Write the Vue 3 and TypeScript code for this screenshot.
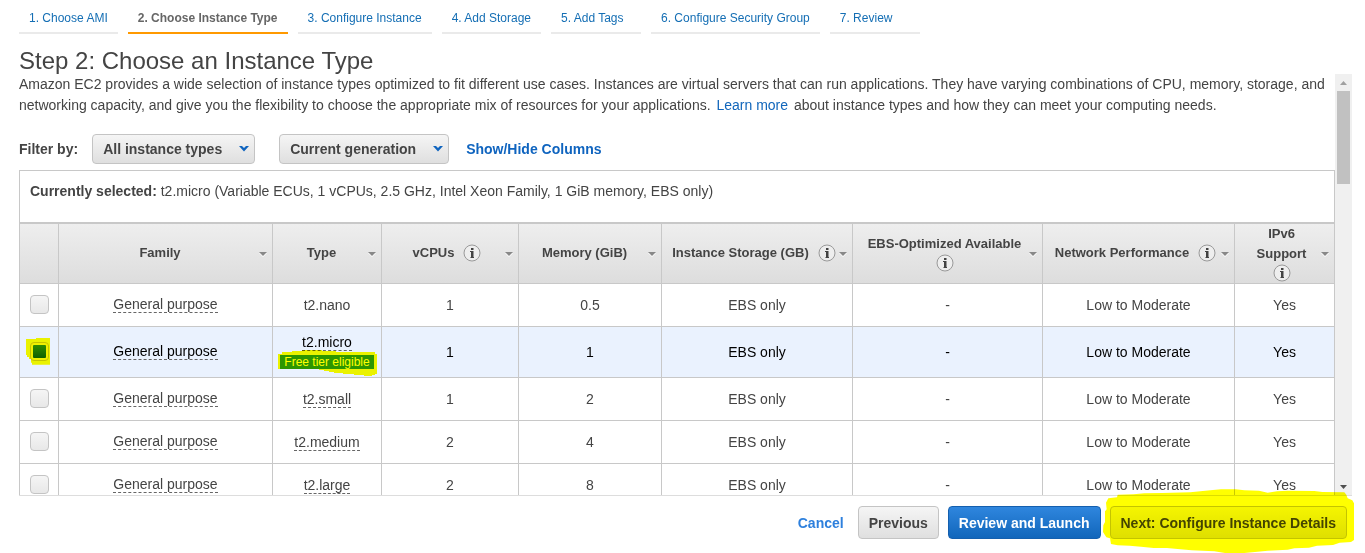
<script setup lang="ts">
import { ref } from 'vue'

interface Column {
  label: string
  width: number
  info?: boolean
  stacked?: boolean
}

interface InstanceType {
  family: string
  type: string
  plain?: boolean
  freeTier?: boolean
  vcpus: string
  memory: string
  storage: string
  ebs: string
  network: string
  ipv6: string
}

const steps: string[] = [
  '1. Choose AMI',
  '2. Choose Instance Type',
  '3. Configure Instance',
  '4. Add Storage',
  '5. Add Tags',
  '6. Configure Security Group',
  '7. Review',
]
const activeStep = 1

const columns: Column[] = [
  { label: 'Family', width: 214 },
  { label: 'Type', width: 109 },
  { label: 'vCPUs', width: 137, info: true },
  { label: 'Memory (GiB)', width: 143 },
  { label: 'Instance Storage (GB)', width: 191, info: true },
  { label: 'EBS-Optimized Available', width: 190, info: true, stacked: true },
  { label: 'Network Performance', width: 192, info: true },
  { label: 'IPv6 Support', width: 100, info: true, stacked: true },
]

function t2(type: string, vcpus: string, memory: string): InstanceType {
  return {
    family: 'General purpose',
    type,
    vcpus,
    memory,
    storage: 'EBS only',
    ebs: '-',
    network: 'Low to Moderate',
    ipv6: 'Yes',
  }
}

const rows: InstanceType[] = [
  { ...t2('t2.nano', '1', '0.5'), plain: true },
  { ...t2('t2.micro', '1', '1'), freeTier: true },
  t2('t2.small', '1', '2'),
  t2('t2.medium', '2', '4'),
  t2('t2.large', '2', '8'),
]

const selected = ref('t2.micro')
const family = ref('All instance types')
const generation = ref('Current generation')
</script>

<template>
  <div class="wizard">
    <nav class="steps" aria-label="Wizard steps">
      <a
        v-for="(step, i) in steps"
        :key="step"
        href="#"
        class="step"
        :class="{ active: i === activeStep }"
        :aria-current="i === activeStep ? 'step' : undefined"
      >{{ step }}</a>
    </nav>

    <h1>Step 2: Choose an Instance Type</h1>

    <div class="viewport">
      <main class="content">
        <p class="intro">
          Amazon EC2 provides a wide selection of instance types optimized to fit different use cases. Instances are virtual servers that can run applications. They have varying combinations of CPU, memory, storage, and networking capacity, and give you the flexibility to choose the appropriate mix of resources for your applications. <a href="#" class="learn">Learn more</a> about instance types and how they can meet your computing needs.
        </p>

        <div class="filters">
          <span class="filter-label">Filter by:</span>
          <span class="dropdown">
            <select v-model="family" aria-label="Instance family">
              <option>All instance types</option>
              <option>General purpose</option>
            </select>
            <svg class="chevron" viewBox="0 0 10 6" aria-hidden="true"><path d="M0 0H3L5 2L7 0H10L5 5.5Z" /></svg>
          </span>
          <span class="dropdown wide">
            <select v-model="generation" aria-label="Generation">
              <option>Current generation</option>
              <option>All generations</option>
            </select>
            <svg class="chevron" viewBox="0 0 10 6" aria-hidden="true"><path d="M0 0H3L5 2L7 0H10L5 5.5Z" /></svg>
          </span>
          <a href="#" class="columns-link">Show/Hide Columns</a>
        </div>

        <div class="panel">
          <p class="current">
            <strong>Currently selected:</strong> t2.micro (Variable ECUs, 1 vCPUs, 2.5 GHz, Intel Xeon Family, 1 GiB memory, EBS only)
          </p>
          <table>
            <colgroup>
              <col class="pick-col" />
              <col v-for="c in columns" :key="c.label" :style="{ width: c.width + 'px' }" />
            </colgroup>
            <thead>
              <tr>
                <th aria-label="Select"></th>
                <th v-for="c in columns" :key="c.label" scope="col">
                  <div class="head" :class="{ 'with-info': c.info }">
                    <span class="head-label" :class="{ stacked: c.stacked }">
                      <span>{{ c.label }}</span>
                      <svg v-if="c.info" class="info" viewBox="0 0 18 18" aria-hidden="true">
                        <circle cx="9" cy="9" r="8" />
                        <path d="M8 4H10.5V6H8ZM7 7H10.5V13H11V14H7.5V13H8V8H7Z" />
                      </svg>
                    </span>
                    <svg class="caret" viewBox="0 0 8 5" aria-hidden="true"><path class="shine" d="M0 1H8L4 5Z" /><path d="M0 0H8L4 4Z" /></svg>
                  </div>
                </th>
              </tr>
            </thead>
            <tbody>
              <tr v-for="r in rows" :key="r.type" :class="{ chosen: selected === r.type }">
                <td>
                  <span class="pick">
                    <input v-model="selected" type="radio" name="instance" :value="r.type" :aria-label="r.type" />
                    <svg v-if="r.freeTier" class="marker pick-marker" viewBox="0 0 72 81" aria-hidden="true">
                      <path d="M0 3H30V0H72V80H18V74H15V63H9V57H3V51H0Z" />
                    </svg>
                  </span>
                </td>
                <td class="family-cell"><span class="term">{{ r.family }}</span></td>
                <td class="type-cell">
                  <span :class="{ term: !r.plain }">{{ r.type }}</span>
                  <span v-if="r.freeTier" class="tier">
                    <span class="badge">Free tier eligible</span>
                    <svg class="marker tier-marker" viewBox="0 0 297 78" aria-hidden="true">
                      <path d="M0 12H12V6H42V3H72V0H132V3H174V6H291V12H297V72H291V75H282V78H258V75H228V72H195V69H168V66H153V63H138V60H123V57H0Z" />
                    </svg>
                  </span>
                </td>
                <td>{{ r.vcpus }}</td>
                <td>{{ r.memory }}</td>
                <td>{{ r.storage }}</td>
                <td>{{ r.ebs }}</td>
                <td>{{ r.network }}</td>
                <td>{{ r.ipv6 }}</td>
              </tr>
            </tbody>
          </table>
        </div>
      </main>

      <div class="scrollbar" aria-hidden="true">
        <svg class="arrow up" viewBox="0 0 7 4"><path d="M0 4L3.5 0L7 4Z" /></svg>
        <div class="track"><div class="thumb"></div></div>
        <svg class="arrow down" viewBox="0 0 7 4"><path d="M0 0L3.5 4L7 0Z" /></svg>
      </div>
    </div>

    <footer>
      <a href="#" class="cancel">Cancel</a>
      <button type="button">Previous</button>
      <button type="button" class="primary">Review and Launch</button>
      <span class="next">
        <button type="button">Next: Configure Instance Details</button>
        <svg class="marker next-marker" viewBox="0 0 795 309" aria-hidden="true">
          <path d="M15 158L22 145L48 142L50 134L98 133L130 130L184 129L268 127L298 124L328 121L360 118L404 118L430 121L474 122L500 128L528 124L560 122L640 123L664 126L730 127L736 134L740 145L754 151L759 160V270L750 276L716 278L696 285L648 287L624 293L580 295L560 299L500 302L470 305L430 309H372L340 304L272 301L230 297L198 294L158 294L120 290L86 287L50 286L30 282L27 265L16 262L6 246L7 226L12 216V184L17 178Z" />
        </svg>
      </span>
    </footer>
  </div>
</template>

<style>
body {
  margin: 0;
  background: #fff;
}
</style>

<style scoped>
.wizard {
  box-sizing: border-box;
  height: 100vh;
  display: flex;
  flex-direction: column;
  overflow: hidden;
  padding-left: 19px;
  color: #444;
  font: 14px/20px "Liberation Sans", Arial, sans-serif;
}
a {
  color: #146eb4;
  text-decoration: none;
}
.steps {
  display: flex;
  gap: 10px;
  padding-top: 8px;
  font-size: 12px;
}
.step {
  box-sizing: border-box;
  min-width: 90px;
  height: 26px;
  padding: 0 10px;
  border-bottom: 2px solid #eaeaea;
  white-space: nowrap;
}
.step.active {
  border-color: #f90;
  color: #666;
  font-weight: bold;
}
h1 {
  margin: 14px 0 0;
  font-size: 24px;
  line-height: 26px;
  font-weight: normal;
}
.viewport {
  flex: 1;
  min-height: 0;
  display: flex;
  margin-right: 13px;
  border-bottom: 1px solid #ddd;
}
.content {
  flex: 1;
  min-width: 0;
  overflow: hidden;
}
.intro {
  margin: 0;
  line-height: 21px;
}
.learn {
  margin: 0 2px;
  color: #1166bb;
}
.filters {
  display: flex;
  align-items: center;
  height: 30px;
  margin: 18px 0 6px;
  font-weight: bold;
}
.filter-label {
  margin-right: 14px;
}
.dropdown {
  display: grid;
  align-items: center;
  width: 163px;
  margin-right: 24px;
}
.dropdown.wide {
  width: 170px;
  margin-right: 17px;
}
.dropdown select {
  grid-area: 1 / 1;
  appearance: none;
  box-sizing: border-box;
  width: 100%;
  height: 30px;
  padding: 0 26px 0 10px;
  border: 1px solid #c4c4c4;
  border-radius: 4px;
  background: linear-gradient(#f5f5f5, #dfdfdf);
  color: #444;
  font: inherit;
}
.chevron {
  grid-area: 1 / 1;
  justify-self: end;
  width: 10px;
  height: 6px;
  margin-right: 6px;
  fill: #0f64bf;
  pointer-events: none;
}
.columns-link {
  color: #0f64bf;
}
.panel {
  border: 1px solid #c8c8c8;
  border-right: 0;
}
.current {
  margin: 0;
  padding: 10px;
  height: 31px;
  border-right: 1px solid #c8c8c8;
}
table {
  width: 100%;
  table-layout: fixed;
  border-collapse: separate;
  border-spacing: 0;
}
.pick-col {
  width: 39px;
}
th,
td {
  padding: 0;
  border-right: 1px solid #c8c8c8;
  border-bottom: 1px solid #c8c8c8;
  text-align: center;
}
th {
  height: 59px;
  border-top: 2px solid #c8c8c8;
  background: linear-gradient(#eee, #ddd);
  font-size: 13px;
  line-height: 20px;
}
td {
  height: 42px;
}
.head {
  display: flex;
  align-items: center;
  padding: 0 5px 1px 2px;
}
.head.with-info {
  padding-left: 7px;
}
.head-label {
  flex: 1;
  display: flex;
  align-items: center;
  justify-content: center;
  gap: 9px;
}
.head-label.stacked {
  flex-direction: column;
  gap: 0;
}
.info {
  flex: none;
  width: 18px;
  height: 18px;
  fill: #444;
}
.info circle {
  fill: #eee;
  stroke: #999;
}
.caret {
  flex: none;
  width: 8px;
  height: 5px;
  margin-top: 2px;
  fill: #888;
}
.caret .shine {
  fill: #fff;
}
.chosen td {
  height: 50px;
  background: #eaf2fe;
  color: #000;
}
.term {
  display: inline-block;
  line-height: 16px;
  border-bottom: 1px dashed #666;
}
.pick {
  position: relative;
  display: inline-block;
  vertical-align: top;
  height: 19px;
}
.pick input {
  appearance: none;
  display: block;
  box-sizing: border-box;
  width: 19px;
  height: 19px;
  margin: 0;
  padding: 2px;
  border: 1px solid #c4c4c4;
  border-radius: 4px;
  background: linear-gradient(#f5f5f5, #e8e8e8);
}
.pick input:checked {
  background: linear-gradient(#2f8c22, #0f6010) content-box, #f0f0f0;
}
td.family-cell {
  height: 40px;
  padding-bottom: 2px;
}
.chosen td.family-cell {
  height: 48px;
}
.type-cell {
  line-height: 18px;
}
.chosen td.type-cell {
  height: 48px;
  padding-bottom: 2px;
}
.tier {
  position: relative;
  display: block;
  width: 94px;
  margin: 4px auto 0;
}
.badge {
  display: block;
  background: #2d9600;
  color: #fff;
  font-size: 12px;
  line-height: 14px;
  white-space: nowrap;
}
.marker {
  position: absolute;
  fill: #ff0;
  mix-blend-mode: multiply;
  pointer-events: none;
}
.pick-marker {
  left: -4px;
  top: -4px;
  width: 24px;
  height: 27px;
}
.tier-marker {
  left: -2px;
  top: -5px;
  width: 99px;
  height: 26px;
}
.next-marker {
  left: -9px;
  top: -56px;
  width: 265px;
  height: 103px;
}
.scrollbar {
  flex: none;
  width: 17px;
  display: flex;
  flex-direction: column;
  align-items: center;
  background: #f0f0f0;
}
.arrow {
  width: 7px;
  height: 4px;
  padding: 7px 0 6px;
}
.up {
  fill: #a0a0a0;
}
.down {
  fill: #505050;
}
.track {
  flex: 1;
}
.thumb {
  width: 13px;
  height: 24%;
  background: #c1c1c1;
}
footer {
  display: flex;
  justify-content: flex-end;
  align-items: center;
  gap: 9px;
  height: 33px;
  padding: 10px 18px 14px 0;
  font-weight: bold;
}
.cancel {
  margin-right: 5px;
  color: #2e80dd;
}
.next {
  position: relative;
}
footer button {
  box-sizing: border-box;
  display: block;
  height: 33px;
  padding: 0 10px;
  border: 1px solid #c4c4c4;
  border-radius: 4px;
  background: linear-gradient(#f5f5f5, #dfdfdf);
  color: #444;
  font: inherit;
  white-space: nowrap;
}
footer .primary {
  border-color: #145fae;
  background: linear-gradient(#2f86de, #1166bb);
  color: #fff;
}
</style>
